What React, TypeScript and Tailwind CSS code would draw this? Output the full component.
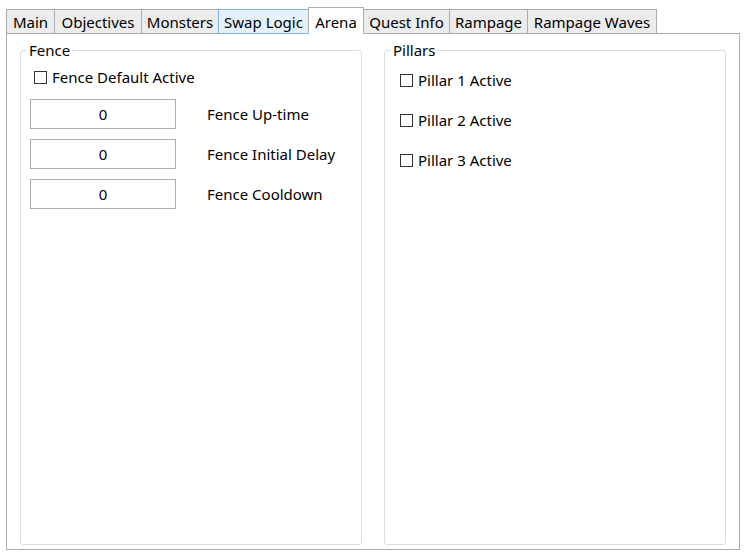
import React from 'react'

const tabs = [
  { label: 'Main', width: 'w-[49px]' },
  { label: 'Objectives', width: 'w-[88px]' },
  { label: 'Monsters', width: 'w-[78px]' },
  { label: 'Swap Logic', width: 'w-[91px]', hover: true },
  { label: 'Arena', width: 'w-[56px]', active: true },
  { label: 'Quest Info', width: 'w-[87px]' },
  { label: 'Rampage', width: 'w-[79px]' },
  { label: 'Rampage Waves', width: 'w-[130px]' },
]

function CheckBox({ label }: { label: string }) {
  return (
    <div className="flex items-center h-[20px] gap-[5px]">
      <div className="w-[13px] h-[13px] border border-[#333333] bg-white shrink-0" />
      <span>{label}</span>
    </div>
  )
}

function NumberRow({ label }: { label: string }) {
  return (
    <div className="flex items-center">
      <div className="w-[146px] h-[30px] border border-[#abadb3] flex items-center justify-center">
        0
      </div>
      <span className="ml-[31px]">{label}</span>
    </div>
  )
}

export default function App() {
  return (
    <div
      className="w-[745px] h-[555px] bg-white text-black text-[15px] leading-[20px]"
      style={{ fontFamily: '"Segoe UI", "Noto Sans", sans-serif' }}
    >
      <div className="flex items-end h-[27px] mt-[7px] pl-[6px]">
        {tabs.map((tab, i) => (
          <div
            key={tab.label}
            className={`${tab.width} ${i > 0 ? '-ml-px' : ''} flex justify-center border ${
              tab.active
                ? 'h-[27px] pt-[4px] bg-white border-[#acacac] border-b-0 relative z-10'
                : tab.hover
                ? 'h-[25px] pt-[2px] bg-[#e5f1fb] border-[#7eb4ea] relative z-[1]'
                : 'h-[25px] pt-[2px] bg-[#ececec] border-[#acacac]'
            }`}
          >
            {tab.label}
          </div>
        ))}
      </div>

      <div className="-mt-px w-[734px] h-[517px] ml-[6px] border border-[#acacac] flex gap-[22px] px-[13px] pt-[6px] pb-[4px]">
        <fieldset className="flex-1 border border-[#d5dfe5] rounded-[3px]">
          <legend className="ml-[6px] px-[2px]">Fence</legend>
          <div className="pl-[13px] mt-[7px]">
            <CheckBox label="Fence Default Active" />
          </div>
          <div className="pl-[9px] mt-[12px] flex flex-col gap-[10px]">
            <NumberRow label="Fence Up-time" />
            <NumberRow label="Fence Initial Delay" />
            <NumberRow label="Fence Cooldown" />
          </div>
        </fieldset>

        <fieldset className="flex-1 border border-[#d5dfe5] rounded-[3px]">
          <legend className="ml-[6px] px-[2px]">Pillars</legend>
          <div className="pl-[15px] mt-[10px] flex flex-col gap-[20px]">
            <CheckBox label="Pillar 1 Active" />
            <CheckBox label="Pillar 2 Active" />
            <CheckBox label="Pillar 3 Active" />
          </div>
        </fieldset>
      </div>
    </div>
  )
}
